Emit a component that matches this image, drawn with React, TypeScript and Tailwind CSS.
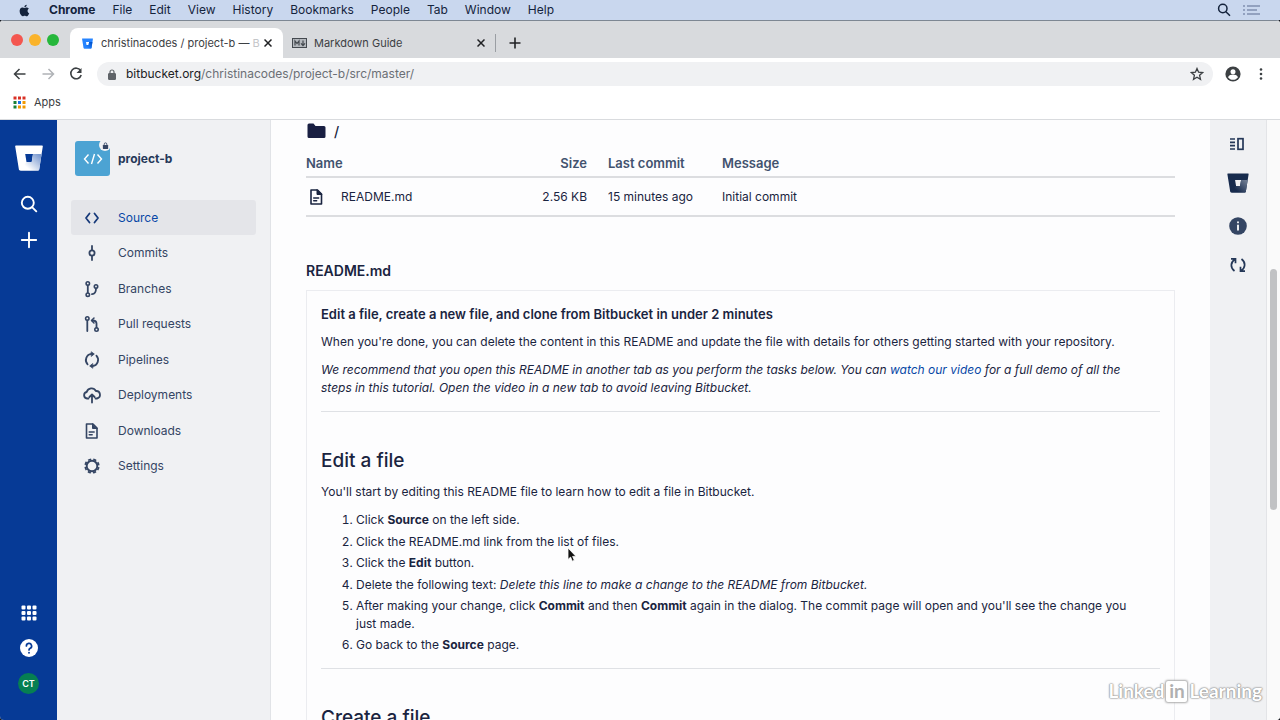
import React from 'react';

const menuItems = ['File', 'Edit', 'View', 'History', 'Bookmarks', 'People', 'Tab', 'Window', 'Help'];

const appDots = [
  '#d93025', '#d93025', '#d93025',
  '#188038', '#1a73e8', '#f29900',
  '#188038', '#f29900', '#f29900',
];

const Icon: React.FC<{ children: React.ReactNode }> = ({ children }) => (
  <svg
    viewBox="0 0 20 20"
    className="h-5 w-5 shrink-0"
    fill="none"
    stroke="currentColor"
    strokeWidth="1.8"
    strokeLinecap="round"
    strokeLinejoin="round"
    aria-hidden="true"
  >
    {children}
  </svg>
);

const FileIcon = () => (
  <Icon>
    <path d="M5 3h6.500l4 4v10H5z" strokeWidth="1.600" />
    <path d="M11 3v4.500h4.500z" fill="currentColor" strokeWidth="1" />
    <path d="M7.700 11h5M7.700 13.800h3" strokeWidth="1.400" />
  </Icon>
);

const BucketLogo: React.FC<{ id: string; color: string; fade: string; className: string }> = ({ id, color, fade, className }) => (
  <svg viewBox="0 0 28 26" className={className} aria-hidden="true">
    <defs>
      <linearGradient id={id} x1="1" y1="0.2" x2="0.3" y2="0.8">
        <stop offset="0" stopColor={fade} />
        <stop offset="1" stopColor={color} />
      </linearGradient>
    </defs>
    <path
      fillRule="evenodd"
      fill={color}
      d="M1 0.500h26a.8.8 0 0 1 .8 1L24.200 24.500a1.200 1.200 0 0 1-1.200 1H5.200a1.400 1.400 0 0 1-1.300-1.100L.2 1.500a.8.8 0 0 1 .8-1zM10.200 9l1.300 8h5.200l1.300-8z"
    />
    <path fill={`url(#${id})`} d="M18 9h8.600L24.200 24.500a1.200 1.200 0 0 1-1.200 1H5.200l6.300-8.500h5.200z" />
  </svg>
);

const navItems = [
  {
    label: 'Source',
    active: true,
    icon: <path d="M7.500 5.500L4 10l3.500 4.500M12.500 5.500L16 10l-3.500 4.500" />,
  },
  {
    label: 'Commits',
    icon: (
      <>
        <circle cx="10" cy="10" r="2.600" />
        <path d="M10 3v4M10 13v4" />
      </>
    ),
  },
  {
    label: 'Branches',
    icon: (
      <>
        <circle cx="5.800" cy="4.500" r="1.700" strokeWidth="1.600" />
        <circle cx="5.800" cy="15.700" r="1.700" strokeWidth="1.600" />
        <circle cx="14" cy="7.500" r="1.700" strokeWidth="1.600" />
        <path d="M5.800 6.500v7M14 9.500c0 3.500-1.200 5.500-4 5.700" />
      </>
    ),
  },
  {
    label: 'Pull requests',
    icon: (
      <>
        <circle cx="5.300" cy="4.500" r="1.700" strokeWidth="1.600" />
        <circle cx="14.500" cy="15.500" r="1.700" strokeWidth="1.600" />
        <path d="M5.300 6.500V17M14.500 13.500V9.500c0-2-1-3-4-3" />
        <path d="M12 4l-2.500 2.500L12 9" strokeWidth="1.500" />
      </>
    ),
  },
  {
    label: 'Pipelines',
    icon: (
      <>
        <path d="M5.600 14.300A6.200 6.200 0 0 1 9.500 3.900M14.400 5.700a6.200 6.200 0 0 1-3.900 10.400" />
        <path d="M9.500 2l2.800 2-2.800 2.200zM10.500 13.800L7.700 16l2.800 2z" fill="currentColor" strokeWidth="0.800" />
      </>
    ),
  },
  {
    label: 'Deployments',
    icon: (
      <>
        <path d="M6.500 13.500H5a3.300 3.300 0 0 1-.3-6.500 5 5 0 0 1 9.200-1 3.800 3.800 0 0 1 1.100 7.500h-1.500" />
        <path d="M10 17.500V10M7.400 12L10 9.400l2.600 2.600" />
      </>
    ),
  },
  {
    label: 'Downloads',
    icon: (
      <>
        <path d="M4.500 3H11l4 4v10H4.500z" strokeWidth="1.600" />
        <path d="M10.500 3v4.500H15z" fill="currentColor" strokeWidth="1" />
        <path d="M7.200 11h5M7.200 13.800h3" strokeWidth="1.400" />
      </>
    ),
  },
  {
    label: 'Settings',
    icon: (
      <>
        <circle cx="10" cy="10" r="5.300" strokeWidth="1.900" />
        <circle cx="10" cy="10" r="6.800" strokeWidth="1.700" strokeLinecap="butt" strokeDasharray="3.200 2.140" strokeDashoffset="-1.070" />
      </>
    ),
  },
];

const MenuBar = () => (
  <header className="flex h-5 shrink-0 items-center bg-[#c9d7ee] pr-5 pl-[18px] text-[12px] text-[#14233c]">
    <svg viewBox="0 0 24 24" className="mr-[18px] h-[15px] w-[13px] scale-110" fill="currentColor" aria-label="Apple">
      <path d="M17.100 12.700c0-2.500 2-3.700 2.100-3.800-1.200-1.700-3-1.900-3.600-2-1.500-.1-3 .9-3.700.9-.8 0-2-.9-3.200-.9-1.700 0-3.200 1-4.100 2.400-1.700 3-.4 7.500 1.300 10 .8 1.200 1.800 2.500 3.100 2.500s1.700-.8 3.200-.8 2 .8 3.300.8c1.400 0 2.200-1.200 3-2.400 1-1.400 1.400-2.700 1.400-2.800 0 0-2.800-1.100-2.800-3.900zM14.700 5.400c.7-.8 1.100-2 1-3.100-1 0-2.200.6-2.900 1.400-.6.7-1.200 1.900-1 3 1.100.1 2.200-.5 2.900-1.300z" />
    </svg>
    <nav className="flex gap-[17px]">
      <button type="button" className="font-bold">Chrome</button>
      {menuItems.map((item) => (
        <button key={item} type="button">{item}</button>
      ))}
    </nav>
    <div className="ml-auto flex items-center gap-3">
      <button type="button" aria-label="Spotlight">
        <svg viewBox="0 0 14 14" className="h-[14px] w-[14px]" fill="none" stroke="currentColor" strokeWidth="1.500">
          <circle cx="5.800" cy="5.500" r="4.200" />
          <path d="M8.900 8.700l4.100 4.100" />
        </svg>
      </button>
      <button type="button" aria-label="Notifications" className="text-[#8090b0]">
        <svg viewBox="0 0 17 12" className="h-3 w-[17px]" fill="none" stroke="currentColor" strokeWidth="1.500">
          <path d="M0 2h2M0 6h2M0 10h2M4 2h13M4 6h10M4 10h13" />
        </svg>
      </button>
    </div>
  </header>
);

const CloseIcon = () => (
  <svg viewBox="0 0 8 8" className="h-2 w-2" stroke="#202124" strokeWidth="1.500" aria-hidden="true">
    <path d="M.5.5l7 7M7.500.5l-7 7" />
  </svg>
);

const TabStrip = () => (
  <div className="flex h-[38px] shrink-0 items-end border-t border-[#7d8793] bg-[#d8dadd] text-[11px] text-[#3c4043]">
    <div className="flex h-9 w-[70px] shrink-0 items-center gap-[6px] pl-[11px]">
      <button type="button" aria-label="Close window" className="h-3 w-3 rounded-full bg-[#f4564f]" />
      <button type="button" aria-label="Minimize window" className="h-3 w-3 rounded-full bg-[#fab32a]" />
      <button type="button" aria-label="Zoom window" className="h-3 w-3 rounded-full bg-[#26b73b]" />
    </div>
    <div className="flex h-[30px] w-[213px] items-center rounded-t-lg bg-white pr-[11px] pl-3">
      <BucketLogo id="favicon" color="#2684ff" fade="#0052cc" className="h-[11px] w-[11px] shrink-0" />
      <button type="button" className="ml-2 whitespace-nowrap">
        christinacodes / project-b — <span className="text-[#c4c6c9]">B</span>
      </button>
      <button type="button" aria-label="Close tab" className="ml-auto">
        <CloseIcon />
      </button>
    </div>
    <div className="flex h-[30px] w-[212px] items-center pr-[10px] pl-[9px]">
      <svg viewBox="0 0 15 10" className="h-[10px] w-[15px]" fill="none" stroke="#44494f" aria-hidden="true">
        <rect x="0.500" y="0.500" width="14" height="9" fill="#b4b8bd" />
        <path d="M3 7.500V3l2 2.500L7 3v4.500M11 2.500v4.500M9 5.300l2 2.200 2-2.200" strokeWidth="1.200" />
      </svg>
      <button type="button" className="ml-[7px]">Markdown Guide</button>
      <button type="button" aria-label="Close tab" className="ml-auto">
        <CloseIcon />
      </button>
    </div>
    <div className="flex h-[30px] items-center">
      <span className="h-[18px] w-px bg-[#9a9ea3]" />
      <button type="button" aria-label="New tab" className="ml-[13px]">
        <svg viewBox="0 0 12 12" className="h-3 w-3" stroke="#202124" strokeWidth="1.600">
          <path d="M6 .5v11M.5 6h11" />
        </svg>
      </button>
    </div>
  </div>
);

const Toolbar = () => (
  <div className="flex h-8 shrink-0 items-center bg-white pr-3 pl-3 text-[#3c4043]">
    <div className="flex gap-3">
      <button type="button" aria-label="Back">
        <svg viewBox="0 0 16 16" className="h-4 w-4" fill="none" stroke="currentColor" strokeWidth="1.500">
          <path d="M13.500 8h-11M7.500 3l-5 5 5 5" />
        </svg>
      </button>
      <button type="button" aria-label="Forward" className="text-[#b0b3b7]">
        <svg viewBox="0 0 16 16" className="h-4 w-4" fill="none" stroke="currentColor" strokeWidth="1.500">
          <path d="M2.500 8h11M8.500 3l5 5-5 5" />
        </svg>
      </button>
      <button type="button" aria-label="Reload">
        <svg viewBox="0 0 16 16" className="h-4 w-4" fill="none" stroke="currentColor" strokeWidth="1.600">
          <path d="M12.600 4.600A5.300 5.300 0 1 0 13.200 9" />
          <path d="M13.500 2v5h-5z" fill="currentColor" stroke="none" />
        </svg>
      </button>
    </div>
    <div className="ml-[13px] flex h-6 min-w-0 flex-1 items-center rounded-full bg-[#f0f1f3] pr-[9px] pl-[11px] text-[12px]">
      <svg viewBox="0 0 8 11" className="h-[11px] w-2 shrink-0" fill="none" stroke="#5f6368" aria-hidden="true">
        <rect x="0.500" y="4.500" width="7" height="6" rx="0.500" fill="#5f6368" />
        <path d="M2 4.500V3a2 2 0 0 1 4 0v1.500" strokeWidth="1.200" />
      </svg>
      <label htmlFor="address" className="ml-[10px] text-[#202124]">bitbucket.org</label>
      <input
        id="address"
        type="text"
        defaultValue="/christinacodes/project-b/src/master/"
        className="min-w-0 flex-1 bg-transparent text-[#6b6f75] outline-none"
      />
      <button type="button" aria-label="Bookmark this page">
        <svg viewBox="0 0 14 14" className="h-[14px] w-[14px]" fill="none" stroke="currentColor" strokeWidth="1.300">
          <path d="M7 1.500l1.600 3.700 4 .4-3 2.700.9 4L7 10.200l-3.500 2.100.9-4-3-2.700 4-.4z" />
        </svg>
      </button>
    </div>
    <button type="button" aria-label="Profile" className="ml-3">
      <svg viewBox="0 0 16 16" className="h-4 w-4">
        <circle cx="8" cy="8" r="7.600" fill="#3c4043" />
        <circle cx="8" cy="5.700" r="2.500" fill="#fff" />
        <path d="M3 11.200c1.200-2 3-2.600 5-2.600s3.800.6 5 2.600c-1.200 1.700-3 2.600-5 2.600s-3.800-.9-5-2.600z" fill="#fff" />
      </svg>
    </button>
    <button type="button" aria-label="Chrome menu" className="ml-[13px]">
      <svg viewBox="0 0 14 14" className="h-[14px] w-[14px]" fill="#3c4043">
        <circle cx="7" cy="2.500" r="1.300" />
        <circle cx="7" cy="7" r="1.300" />
        <circle cx="7" cy="11.500" r="1.300" />
      </svg>
    </button>
  </div>
);

const BookmarksBar = () => (
  <div className="flex h-[30px] shrink-0 items-center border-b border-[#d9dbde] bg-white pb-[5px] pl-[13px] text-[11px] text-[#3c4043]">
    <a href="#apps" className="flex items-center gap-2">
      <svg viewBox="0 0 13 13" className="h-[13px] w-[13px]" aria-hidden="true">
        {appDots.map((fill, i) => (
          <rect key={i} x={0.5 + (i % 3) * 4.5} y={0.5 + Math.floor(i / 3) * 4.5} width="3" height="3" fill={fill} />
        ))}
      </svg>
      Apps
    </a>
  </div>
);

const GlobalRail = () => (
  <aside className="flex w-[57px] shrink-0 flex-col items-center bg-[#063a96] pt-[25px] pb-[26px] text-white">
    <a href="#home" aria-label="Bitbucket">
      <BucketLogo id="rail-logo" color="#ffffff" fade="#7d9bd0" className="h-[26px] w-7" />
    </a>
    <button type="button" aria-label="Search" className="mt-6">
      <svg viewBox="0 0 18 18" className="h-[18px] w-[18px]" fill="none" stroke="currentColor" strokeWidth="1.900" strokeLinecap="round">
        <circle cx="7.800" cy="7.800" r="6" />
        <path d="M12.300 12.300l4 4" />
      </svg>
    </button>
    <button type="button" aria-label="Create" className="mt-[18px]">
      <svg viewBox="0 0 18 18" className="h-[18px] w-[18px]" stroke="currentColor" strokeWidth="1.900" strokeLinecap="round">
        <path d="M9 1.800v14.400M1.800 9h14.400" />
      </svg>
    </button>
    <button type="button" aria-label="Switch product" className="mt-auto">
      <svg viewBox="0 0 16 16" className="h-4 w-4" fill="currentColor">
        {[0, 1, 2].map((row) =>
          [0, 1, 2].map((col) => (
            <rect key={`${row}${col}`} x={0.5 + col * 5.5} y={0.5 + row * 5.5} width="4" height="4" rx="1" />
          )),
        )}
      </svg>
    </button>
    <button
      type="button"
      aria-label="Help"
      className="mt-[18px] flex h-[18px] w-[18px] items-center justify-center rounded-full bg-white text-[#063a96]"
    >
      <svg viewBox="0 0 18 18" className="h-[18px] w-[18px]" fill="none" stroke="currentColor" strokeWidth="1.700" strokeLinecap="round">
        <path d="M6.400 7a2.600 2.600 0 1 1 3.800 2.300c-.9.500-1.200.9-1.200 1.700" />
        <path d="M9 13.700v.1" strokeWidth="1.900" />
      </svg>
    </button>
    <button
      type="button"
      className="mt-4 flex h-[21px] w-[21px] items-center justify-center rounded-full bg-[#067f52] text-[9px] font-semibold"
    >
      CT
    </button>
  </aside>
);

const RepoSidebar = () => (
  <aside className="w-[214px] shrink-0 border-r border-[#e1e3e7] bg-[#f0f1f3] pr-[14px] pl-[14px]">
    <div className="flex items-center pt-[21px] pl-1">
      <div className="relative flex h-[35px] w-[35px] items-center justify-center rounded-[3px] bg-[#4ca3d3] text-white">
        <svg viewBox="0 0 20 12" className="h-3 w-5" fill="none" stroke="currentColor" strokeWidth="1.400" aria-hidden="true">
          <path d="M5.500 1.500L1.500 6l4 4.500M14.500 1.500l4 4.500-4 4.500M11.500 1l-3 10" />
        </svg>
        <span className="absolute -top-[2px] -right-px flex h-3 w-3 items-center justify-center rounded-full bg-[#f0f1f3]">
          <svg viewBox="0 0 8 8" className="h-[7px] w-[7px]" aria-label="Private repository">
            <rect x="1" y="3.500" width="6" height="4.500" rx="0.500" fill="#344563" />
            <path d="M2.500 3.500V2.500a1.500 1.500 0 0 1 3 0v1" fill="none" stroke="#344563" />
          </svg>
        </span>
      </div>
      <a href="#project" className="ml-2 text-[12px] font-bold text-[#253858]">project-b</a>
    </div>
    <ul className="mt-6 text-[12px] text-[#344563]">
      {navItems.map((item) => (
        <li key={item.label} className="even:mb-px">
          <a
            href={`#${item.label}`}
            className={`flex h-[35px] items-center gap-4 rounded-[3px] pl-[11px] ${item.active ? 'bg-[#e4e5e9] text-[#0747a6]' : ''}`}
          >
            <span className={item.active ? 'text-[#173a7a]' : 'text-[#344563]'}>
              <Icon>{item.icon}</Icon>
            </span>
            {item.label}
          </a>
        </li>
      ))}
    </ul>
  </aside>
);

const FileTable = () => (
  <table className="w-full table-fixed border-collapse text-left text-[12px] leading-[18px]">
    <thead className="text-[13px] text-[#42526e]">
      <tr className="h-[29px] border-b-2 border-[#dcdde0]">
        <th className="w-[200px] pt-[2px] font-semibold">Name</th>
        <th className="w-[81px] pt-[2px] text-right font-semibold">Size</th>
        <th className="w-[135px] pt-[2px] pl-[21px] font-semibold">Last commit</th>
        <th className="pt-[2px] font-semibold">Message</th>
      </tr>
    </thead>
    <tbody>
      <tr className="h-[39px] border-b-2 border-[#dcdde0]">
        <td>
          <a href="#readme" className="flex items-center gap-[15px]">
            <FileIcon />
            README.md
          </a>
        </td>
        <td className="text-right">2.56 KB</td>
        <td className="pl-[21px]">15 minutes ago</td>
        <td>Initial commit</td>
      </tr>
    </tbody>
  </table>
);

const Readme = () => (
  <article className="mt-[9px] border border-[#ebecf0] px-[14px] pt-[14px] text-[12px] leading-[18px]">
    <p className="text-[13px] font-semibold">Edit a file, create a new file, and clone from Bitbucket in under 2 minutes</p>
    <p className="mt-[10px]">
      When you're done, you can delete the content in this README and update the file with details for others getting started with your repository.
    </p>
    <p className="mt-[10px] pr-4 italic">
      We recommend that you open this README in another tab as you perform the tasks below. You can{' '}
      <a href="#video" className="text-[#0747a6]">watch our video</a> for a full demo of all the steps in this tutorial. Open the video in a new tab to avoid leaving Bitbucket.
    </p>
    <hr className="mt-[14px] border-[#dfe1e5]" />
    <h2 className="mt-[37px] text-[19px] leading-6 font-medium">Edit a file</h2>
    <p className="mt-[10px]">You'll start by editing this README file to learn how to edit a file in Bitbucket.</p>
    <ol className="mt-[10px] list-decimal pr-4 pl-[35px]">
      <li className="mb-1">Click <strong className="font-bold">Source</strong> on the left side.</li>
      <li className="mb-[3px]">Click the README.md link from the list of files.</li>
      <li className="mb-1">Click the <strong className="font-bold">Edit</strong> button.</li>
      <li className="mb-[3px]">Delete the following text: <em>Delete this line to make a change to the README from Bitbucket.</em></li>
      <li className="mb-[3px]">
        After making your change, click <strong className="font-bold">Commit</strong> and then <strong className="font-bold">Commit</strong> again in the dialog. The commit page will open and you'll see the change you just made.
      </li>
      <li>Go back to the <strong className="font-bold">Source</strong> page.</li>
    </ol>
    <hr className="mt-[14px] border-[#dfe1e5]" />
    <h2 className="mt-[37px] text-[19px] leading-6 font-medium">Create a file</h2>
  </article>
);

const RightRail = () => (
  <aside className="flex w-[56px] shrink-0 flex-col items-center bg-[#f0f1f3] pt-[17px] text-[#253858]">
    <button type="button" aria-label="Show details">
      <svg viewBox="0 0 16 14" className="mr-[2px] h-[14px] w-4" fill="none" stroke="currentColor" strokeWidth="1.700">
        <path d="M1 2h5M1 5.300h5M1 8.700h5M1 12h5" />
        <rect x="9" y="1.700" width="5" height="10.600" />
      </svg>
    </button>
    <button type="button" aria-label="Bitbucket" className="mt-[22px]">
      <BucketLogo id="dark-logo" color="#172b4d" fade="#6d7a90" className="h-5 w-[22px]" />
    </button>
    <button type="button" aria-label="Details" className="mt-6">
      <svg viewBox="0 0 18 18" className="h-[18px] w-[18px]">
        <circle cx="9" cy="9" r="8.800" fill="#344563" />
        <path d="M9 8.300v4.500M9 5.200v.2" stroke="#fff" strokeWidth="1.800" strokeLinecap="round" />
      </svg>
    </button>
    <button type="button" aria-label="Builds" className="mt-[21px]">
      <svg viewBox="0 0 18 18" className="h-[18px] w-[18px]" fill="none" stroke="currentColor" strokeWidth="1.700">
        <path d="M5.500 15C1 11.500 1.500 6.500 5.800 3.300M2 2.800h4.500v4.500" />
        <path d="M12.500 3C17 6.500 16.500 11.500 12.200 14.700M16 15.200h-4.500v-4.500" />
      </svg>
    </button>
  </aside>
);

const App: React.FC = () => (
  <div className="relative flex h-screen flex-col overflow-hidden bg-[#14181f] font-['Inter','Liberation_Sans',sans-serif]">
    <MenuBar />
    <div className="flex min-h-0 flex-1 flex-col overflow-hidden rounded-[4px] bg-white">
      <TabStrip />
      <Toolbar />
      <BookmarksBar />
      <div className="flex min-h-0 flex-1">
        <GlobalRail />
        <RepoSidebar />
        <main className="min-w-0 flex-1 overflow-hidden bg-[#fdfdfe] px-[35px] pt-px text-[#1a2440]">
          <div className="flex h-5 items-center gap-2 text-[14px] font-medium">
            <svg viewBox="0 0 20 18" className="h-[18px] w-5" fill="#191f42" aria-hidden="true">
              <path d="M1.500 3A1.500 1.500 0 0 1 3 1.500h4.500L9.500 4H18a1.500 1.500 0 0 1 1.500 1.500v9A1.500 1.500 0 0 1 18 16H3a1.500 1.500 0 0 1-1.500-1.500z" />
            </svg>
            <a href="#root">/</a>
          </div>
          <div className="mt-[7px]">
            <FileTable />
          </div>
          <h1 className="mt-11 text-[14px] leading-5 font-semibold">README.md</h1>
          <Readme />
        </main>
        <RightRail />
        <div className="w-[14px] shrink-0 border-l border-[#e3e4e7] bg-[#fafafa] pt-[149px] pl-[3px]">
          <div className="h-[241px] w-[7px] rounded-full bg-[#c1c2c4]" />
        </div>
      </div>
    </div>

    <svg viewBox="0 0 10 16" className="absolute top-[547px] left-[567px] h-4 w-[10px]" aria-hidden="true">
      <path d="M1 1v11.500l2.600-2.400 1.700 4.100 2-.9-1.700-3.900H9z" fill="#111" stroke="#fff" strokeWidth="0.800" />
    </svg>

    <div className="absolute right-[18px] bottom-[17px] flex items-center gap-[2px] font-['Lato',sans-serif] text-[19px] leading-6 font-bold text-white [text-shadow:0_0_1px_#999,0_0_1px_#999,0_0_2px_#999,0_0_2px_#aaa]">
      <span>Linked</span>
      <span className="flex h-[21px] w-[21px] items-center justify-center rounded-[2px] bg-white text-[#b0b0b0] shadow-[0_0_2px_1px_#aaa] [text-shadow:none]">in</span>
      <span>Learning</span>
    </div>
  </div>
);

export default App;
